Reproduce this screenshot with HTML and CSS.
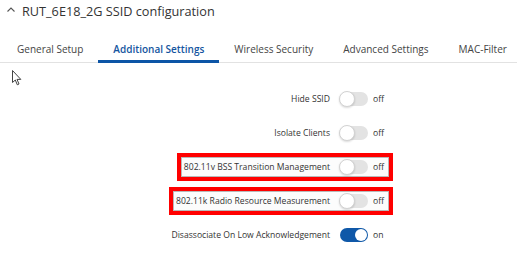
FILE: index.html
```html
<!DOCTYPE html>
<html lang="en">
<head>
    <meta charset="UTF-8">
    <title>SSID configuration</title>
    <link rel="stylesheet" href="styles.css">
</head>
<body>
    <div class="panel">
        <h1 class="title">
            <svg class="chevron" width="8" height="5" viewBox="0 0 8 5"><polyline points="0.5,4.5 4,1 7.5,4.5" fill="none" stroke="#555" stroke-width="1.1"/></svg>
            RUT_6E18_2G SSID configuration
        </h1>

        <!-- Tabs -->
        <div class="tabs">
            <div class="tab">General Setup</div>
            <div class="tab active">Additional Settings</div>
            <div class="tab">Wireless Security</div>
            <div class="tab">Advanced Settings</div>
            <div class="tab">MAC-Filter</div>
        </div>

        <svg class="cursor" width="10" height="16" viewBox="0 0 10 16"><path d="M0.5 0.5 L0.5 12.5 L3.3 10 L5.3 14.8 L7 14 L5 9.4 L8.8 9.4 Z" fill="#fff" stroke="#444" stroke-width="1" stroke-linejoin="round"/></svg>

        <!-- Settings -->
        <div class="rows">
            <div class="row"><div class="field">
                <span class="label">Hide SSID</span><span class="switch"></span><span class="state">off</span>
            </div></div>
            <div class="row"><div class="field">
                <span class="label">Isolate Clients</span><span class="switch"></span><span class="state">off</span>
            </div></div>
            <div class="row"><div class="field marked">
                <span class="label">802.11v BSS Transition Management</span><span class="switch"></span><span class="state">off</span>
            </div></div>
            <div class="row"><div class="field marked">
                <span class="label">802.11k Radio Resource Measurement</span><span class="switch"></span><span class="state">off</span>
            </div></div>
            <div class="row"><div class="field">
                <span class="label">Disassociate On Low Acknowledgement</span><span class="switch on"></span><span class="state">on</span>
            </div></div>
        </div>
    </div>
</body>
</html>
```
FILE: styles.css
```css
body {
    margin: 0;
    background: #fff;
    font-family: "Open Sans", Arial, sans-serif;
    color: #333;
}
.panel {
    position: relative;
    width: 517px;
    height: 257px;
    overflow: hidden;
}
.title {
    display: flex;
    align-items: center;
    gap: 7px;
    margin: 0;
    padding: 0 0 0 7px;
    height: 22px;
    font-size: 12.7px;
    font-weight: 400;
    color: #333;
    white-space: nowrap;
}
.chevron {
    margin-top: -3px;
}
/* Tabs */
.tabs {
    display: flex;
    margin-top: 12px;
    padding-left: 2px;
    border-bottom: 1px solid #e2e2e2;
}
.tab {
    flex-shrink: 0;
    padding: 8px 15px 4px;
    line-height: 14px;
    font-size: 10px;
    color: #444;
    white-space: nowrap;
    border-bottom: 3px solid transparent;
    margin-bottom: -1px;
}
.tab.active {
    color: #1455a0;
    font-weight: 600;
    border-bottom-color: #0c55a6;
}
.cursor {
    position: absolute;
    left: 12px;
    top: 70px;
}
/* Rows */
.rows {
    display: flex;
    flex-direction: column;
    gap: 14px;
    width: 389px;
    margin-top: 26px;
}
.row {
    display: flex;
    justify-content: flex-end;
}
.field {
    display: flex;
    align-items: center;
    height: 20px;
    padding-left: 3px;
    font-size: 8.6px;
    color: #333;
    white-space: nowrap;
}
.field.marked {
    outline: 4px solid #f00;
    box-shadow: inset 0 0 0 1px #b9b9b9;
    background: #fcfcfc;
}
.label {
    margin-right: 10px;
}
.switch {
    position: relative;
    width: 28px;
    height: 14px;
    border-radius: 7px;
    background: #e3e3e3;
}
.switch::after {
    content: "";
    position: absolute;
    left: -1px;
    top: -1px;
    width: 14px;
    height: 14px;
    border-radius: 50%;
    background: #fff;
    border: 1px solid #d2d2d2;
    box-shadow: 0 1px 2px rgba(0, 0, 0, 0.15);
}
.switch.on {
    background: #0f58a8;
}
.switch.on::after {
    left: auto;
    right: 1px;
    top: 1px;
    width: 12px;
    height: 12px;
    border: none;
    box-shadow: none;
}
.state {
    width: 16px;
    margin-left: 5px;
}
```
